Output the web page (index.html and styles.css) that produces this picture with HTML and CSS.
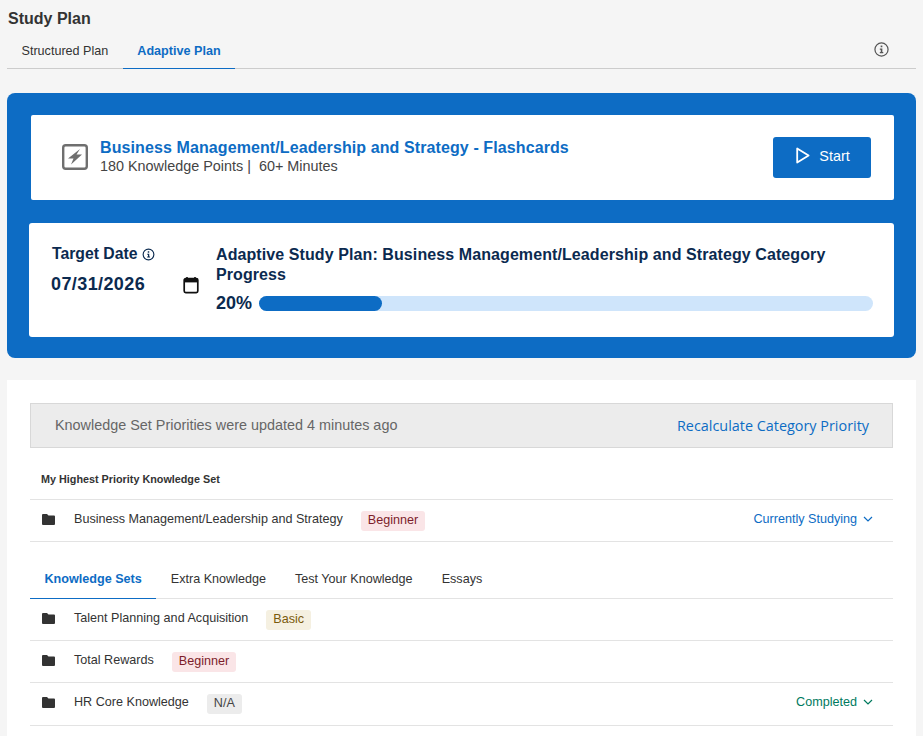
FILE: index.html
```html
<html>
    <head>
        <title>Study Plan</title>
        <link rel="stylesheet" href="styles.css">
    </head>
    <body>
        <h1 class="page-title">Study Plan</h1>

        <div class="plan-tabs">
            <a class="plan-tab">Structured Plan</a>
            <a class="plan-tab active">Adaptive Plan</a>
            <svg class="tabs-info" width="15" height="15" viewBox="0 0 16 16">
                <circle cx="8" cy="8" r="7" fill="none" stroke="#555" stroke-width="1.3"/>
                <rect x="7.1" y="3.8" width="1.8" height="1.8" fill="#555"/>
                <path d="M6.2 7h2.7v3.7h1v1.2H6.2v-1.2h1V8.2h-1z" fill="#555"/>
            </svg>
        </div>

        <section class="hero">
            <div class="next-card">
                <svg class="bolt" width="26" height="26" viewBox="0 0 26 26">
                    <rect x="1.2" y="1.2" width="23.6" height="23.6" rx="2.5" fill="none" stroke="#6f6f6f" stroke-width="2.4"/>
                    <path d="M18 5 6 14.5h5.5L9 20.5l11-10h-5.5z" fill="#6f6f6f"/>
                </svg>
                <div class="next-text">
                    <div class="next-title">Business Management/Leadership and Strategy - Flashcards</div>
                    <div class="next-meta">180 Knowledge Points |&nbsp; 60+ Minutes</div>
                </div>
                <button class="start-btn">
                    <svg width="14" height="17" viewBox="0 0 14 17">
                        <path d="M1.2 1.5v14L12.6 8.5z" fill="none" stroke="#fff" stroke-width="1.8" stroke-linejoin="round"/>
                    </svg>
                    Start
                </button>
            </div>

            <div class="progress-card">
                <div class="target">
                    <div class="target-label">
                        Target Date
                        <svg width="13" height="13" viewBox="0 0 16 16">
                            <circle cx="8" cy="8" r="6.6" fill="none" stroke="#0b2a4f" stroke-width="1.4"/>
                            <rect x="7.1" y="4" width="1.8" height="1.8" fill="#0b2a4f"/>
                            <path d="M6.4 7h2.5v3.6h1v1.2H6.4v-1.2h1V8.2h-1z" fill="#0b2a4f"/>
                        </svg>
                    </div>
                    <div class="target-date">
                        07/31/2026
                        <svg class="calendar" width="16" height="18" viewBox="0 0 16 18">
                            <path d="M4 1v2.5M12 1v2.5" stroke="#111" stroke-width="1.6"/>
                            <rect x="1.2" y="2.6" width="13.6" height="14" rx="1.5" fill="none" stroke="#111" stroke-width="1.7"/>
                            <rect x="1.2" y="3" width="13.6" height="3.4" fill="#111"/>
                        </svg>
                    </div>
                </div>
                <div class="progress-info">
                    <div class="progress-title">Adaptive Study Plan: Business Management/Leadership and Strategy Category Progress</div>
                    <div class="progress-row">
                        <span class="progress-pct">20%</span>
                        <div class="progress-bar">
                            <div class="progress" style="width: 20%"></div>
                        </div>
                    </div>
                </div>
            </div>
        </section>

        <section class="panel">
            <div class="notice">
                <span class="notice-text">Knowledge Set Priorities were updated 4 minutes ago</span>
                <a class="notice-link">Recalculate Category Priority</a>
            </div>

            <div class="priority-heading">My Highest Priority Knowledge Set</div>
            <ul class="set-list">
                <li class="set-row">
                    <svg class="folder" width="13" height="11" viewBox="0 0 13 11"><path d="M1 0h4l1.5 1.5H12a1 1 0 0 1 1 1V10a1 1 0 0 1-1 1H1a1 1 0 0 1-1-1V1a1 1 0 0 1 1-1z" fill="#333"/></svg>
                    <span class="set-name">Business Management/Leadership and Strategy</span>
                    <span class="badge beginner">Beginner</span>
                    <span class="status studying">Currently Studying
                        <svg width="10" height="6" viewBox="0 0 10 6"><path d="M1 1l4 4 4-4" fill="none" stroke="currentColor" stroke-width="1.2"/></svg>
                    </span>
                </li>
            </ul>

            <div class="set-tabs">
                <a class="set-tab active">Knowledge Sets</a>
                <a class="set-tab">Extra Knowledge</a>
                <a class="set-tab">Test Your Knowledge</a>
                <a class="set-tab">Essays</a>
            </div>
            <ul class="set-list">
                <li class="set-row">
                    <svg class="folder" width="13" height="11" viewBox="0 0 13 11"><path d="M1 0h4l1.5 1.5H12a1 1 0 0 1 1 1V10a1 1 0 0 1-1 1H1a1 1 0 0 1-1-1V1a1 1 0 0 1 1-1z" fill="#333"/></svg>
                    <span class="set-name">Talent Planning and Acquisition</span>
                    <span class="badge basic">Basic</span>
                </li>
                <li class="set-row">
                    <svg class="folder" width="13" height="11" viewBox="0 0 13 11"><path d="M1 0h4l1.5 1.5H12a1 1 0 0 1 1 1V10a1 1 0 0 1-1 1H1a1 1 0 0 1-1-1V1a1 1 0 0 1 1-1z" fill="#333"/></svg>
                    <span class="set-name">Total Rewards</span>
                    <span class="badge beginner">Beginner</span>
                </li>
                <li class="set-row">
                    <svg class="folder" width="13" height="11" viewBox="0 0 13 11"><path d="M1 0h4l1.5 1.5H12a1 1 0 0 1 1 1V10a1 1 0 0 1-1 1H1a1 1 0 0 1-1-1V1a1 1 0 0 1 1-1z" fill="#333"/></svg>
                    <span class="set-name">HR Core Knowledge</span>
                    <span class="badge na">N/A</span>
                    <span class="status completed">Completed
                        <svg width="10" height="6" viewBox="0 0 10 6"><path d="M1 1l4 4 4-4" fill="none" stroke="currentColor" stroke-width="1.2"/></svg>
                    </span>
                </li>
            </ul>
        </section>
    </body>
</html>
```

FILE: styles.css
```css
html {
    height: 736px;
    overflow: hidden;
}

body {
    font-family: "Liberation Sans", Arial, sans-serif;
    background-color: #f5f5f5;
    color: #333;
    margin: 0;
    padding: 0 7px;
    height: 736px;
    overflow: hidden;
}

.page-title {
    font-size: 16px;
    line-height: 18px;
    font-weight: bold;
    margin: 0;
    padding: 10px 0 0 1px;
}

.plan-tabs {
    display: flex;
    align-items: center;
    height: 35px;
    margin-top: 5px;
    border-bottom: 1px solid #ccc;
}

.plan-tab {
    font-size: 12.6px;
    color: #333;
    height: 34px;
    line-height: 34px;
    padding: 0 14.5px;
    box-sizing: border-box;
}

.plan-tab.active {
    color: #0d6cc4;
    font-weight: bold;
    border-bottom: 1px solid #0d6cc4;
    margin-bottom: -1px;
    height: 35px;
}

.tabs-info {
    margin-left: auto;
    margin-right: 27px;
    margin-bottom: 2px;
}

.hero {
    background-color: #0d6cc4;
    border-radius: 8px;
    margin-top: 24px;
    padding: 22px 22px 21px;
    height: 265px;
    box-sizing: border-box;
}

.next-card {
    display: flex;
    align-items: center;
    background-color: white;
    border-radius: 2px;
    height: 85px;
    margin-left: 2px;
    padding: 0 23px 0 31px;
}

.bolt {
    margin-right: 12px;
    margin-bottom: 1px;
}

.next-text {
    flex: 1;
    padding-bottom: 2px;
}

.next-title {
    font-size: 16px;
    line-height: 18px;
    font-weight: bold;
    color: #0d6cc4;
    letter-spacing: 0.1px;
}

.next-meta {
    font-size: 14.4px;
    line-height: 16px;
    margin-top: 1px;
    color: #444;
}

.start-btn {
    display: flex;
    align-items: center;
    justify-content: center;
    gap: 9px;
    width: 98px;
    height: 41px;
    padding: 0 0 4px 2px;
    background-color: #0d6cc4;
    border: none;
    border-radius: 3px;
    color: white;
    font-family: inherit;
    font-size: 14.4px;
}

.progress-card {
    display: flex;
    background-color: white;
    border-radius: 3px;
    height: 114px;
    margin-top: 23px;
    padding: 22px 21px 0 23px;
    box-sizing: border-box;
}

.target {
    width: 147px;
    margin-right: 17px;
    color: #0b2a4f;
}

.target-label {
    display: flex;
    align-items: center;
    gap: 5px;
    font-size: 15.75px;
    line-height: 18px;
    font-weight: bold;
}

.target-date {
    display: flex;
    align-items: center;
    justify-content: space-between;
    margin-top: 11px;
    margin-left: -1px;
    font-size: 18px;
    line-height: 20px;
    font-weight: bold;
    letter-spacing: 0.4px;
}

.calendar {
    margin-top: 1px;
}

.progress-info {
    flex: 1;
    color: #0b2a4f;
}

.progress-title {
    font-size: 16px;
    line-height: 20px;
    font-weight: bold;
    letter-spacing: 0.09px;
}

.progress-row {
    display: flex;
    align-items: center;
    gap: 7px;
    margin-top: 8px;
}

.progress-pct {
    font-size: 18px;
    line-height: 20px;
    font-weight: bold;
}

.progress-bar {
    flex: 1;
    height: 15px;
    background-color: #cfe5fb;
    border-radius: 8px;
}

.progress {
    height: 100%;
    background-color: #0d6cc4;
    border-radius: 8px;
}

.panel {
    background-color: white;
    margin-top: 22px;
    padding: 23px 23px 0;
    height: 360px;
    box-sizing: border-box;
}

.notice {
    display: flex;
    align-items: center;
    justify-content: space-between;
    height: 45px;
    box-sizing: border-box;
    background-color: #ececec;
    border: 1px solid #d8d8d8;
    padding: 0 23px 0 24px;
}

.notice-text {
    font-size: 14.4px;
    color: #666;
    margin-bottom: 2px;
}

.notice-link {
    font-family: "Open Sans", sans-serif;
    font-size: 14.4px;
    color: #0d6cc4;
}

.priority-heading {
    font-size: 10.8px;
    line-height: 12px;
    font-weight: bold;
    padding: 25px 0 14px 11px;
}

.set-list {
    list-style-type: none;
    margin: 0;
    padding: 0;
    border-top: 1px solid #e3e3e3;
}

.set-row {
    display: flex;
    align-items: center;
    box-sizing: border-box;
    height: 42.2px;
    padding: 0 20px 0 12px;
    border-bottom: 1px solid #e3e3e3;
    font-size: 12.6px;
}

.folder {
    margin-right: 19px;
    margin-bottom: 3px;
}

.set-name {
    margin-bottom: 3px;
}

.badge {
    font-size: 12.6px;
    line-height: 18px;
    padding: 0 7px 2px;
    border-radius: 3px;
    margin-left: 18px;
}

.beginner {
    background-color: #fae5e7;
    color: #7d1d2a;
}

.basic {
    background-color: #f5f0e1;
    color: #7a5a0c;
}

.na {
    background-color: #ececec;
    color: #444;
}

.status {
    display: flex;
    align-items: center;
    gap: 6px;
    margin-left: auto;
    margin-bottom: 3px;
}

.studying {
    color: #0d6cc4;
}

.completed {
    color: #007a5e;
}

.set-tabs {
    display: flex;
    height: 38px;
    margin-top: 17.8px;
}

.set-tab {
    font-size: 12.6px;
    line-height: 39px;
    padding: 0 14.5px;
}

.set-tab.active {
    color: #0d6cc4;
    font-weight: bold;
    border-bottom: 1px solid #0d6cc4;
    height: 38px;
}
```
